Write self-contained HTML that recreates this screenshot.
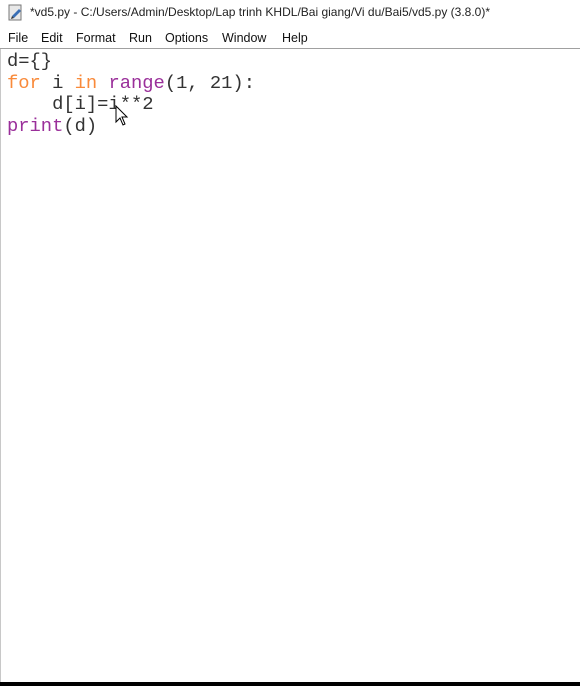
<!DOCTYPE html>
<html><head><style>
body{margin:0;width:580px;height:686px;background:#fff;position:relative;overflow:hidden;font-family:"Liberation Sans",sans-serif}
.title{position:absolute;left:0;top:0;width:580px;height:26px;font-size:12px;color:#222}
.title span{position:absolute;left:30px;top:5px}
.menu{position:absolute;left:0;top:26px;width:580px;height:22px;font-size:12.5px;color:#111;border-bottom:1px solid #a0a0a0}
.menu span{position:absolute;top:5px}
.code{position:absolute;left:7px;top:51px;font-family:"Liberation Mono",monospace;font-size:18.8px;line-height:21.7px;color:#333;white-space:pre}
.k{color:#f98a3a}.b{color:#9a2f9a}
.bot{position:absolute;left:0;top:682px;width:580px;height:4px;background:#000}
.lb{position:absolute;left:0;top:49px;width:1px;height:633px;background:#c8c8c8}
</style></head><body>
<div class="title">
<svg style="position:absolute;left:8px;top:4px" width="16" height="18"><rect x="1" y="1" width="12" height="15" fill="#e8e8e8" stroke="#777"/><path d="M4 12 L11 5 L13 7 L6 14 Z" fill="#3a6fb5"/><path d="M3 15l1-3 2 2z" fill="#333"/></svg>
<span>*vd5.py - C:/Users/Admin/Desktop/Lap trinh KHDL/Bai giang/Vi du/Bai5/vd5.py (3.8.0)*</span></div>
<div class="menu"><span style="left:8px">File</span><span style="left:41px">Edit</span><span style="left:76px">Format</span><span style="left:129px">Run</span><span style="left:165px">Options</span><span style="left:222px">Window</span><span style="left:282px">Help</span></div>
<div class="lb"></div>
<div class="code">d={}
<span class="k">for</span> i <span class="k">in</span> <span class="b">range</span>(1, 21):
    d[i]=i**2
<span class="b">print</span>(d)</div>
<svg style="position:absolute;left:115px;top:105px" width="14" height="22"><path d="M1 1 L1 17 L5 13 L8 20 L10 19 L7 12 L12 12 Z" fill="#fff" stroke="#000" stroke-width="1"/></svg>
<div class="bot"></div>
</body></html>
